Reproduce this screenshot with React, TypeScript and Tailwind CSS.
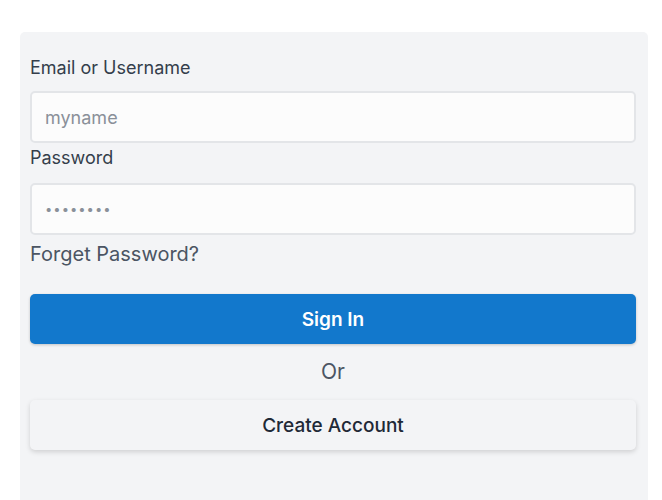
export default function App() {
  return (
    <div className="min-h-[500px] bg-white pl-[20px] pr-[14px] pt-[32px] font-['Inter',sans-serif]">
      <div className="rounded-[5px] bg-[#f3f4f6] pl-[10px] pr-[12px] pt-[24px] pb-[60px]">
        <label className="block text-[18px] leading-[24px] text-[#343e4b]">Email or Username</label>
        <input
          className="mt-[11px] block h-[52px] w-full rounded-[5px] border-2 border-[#e3e5e8] bg-[#fcfcfc] px-[13px] text-[18px] text-[#374151] outline-none placeholder:text-[#8a9099]"
          placeholder="myname"
        />
        <label className="mt-[3px] block text-[18px] leading-[24px] text-[#343e4b]">Password</label>
        <input
          type="password"
          className="mt-[13px] block h-[52px] w-full rounded-[5px] border-2 border-[#e3e5e8] bg-[#fcfcfc] px-[13px] text-[13px] tracking-[1px] text-[#8a9099] outline-none"
          defaultValue="password"
        />
        <div className="mt-[5px] text-[20px] leading-[28px] text-[#4b5563]">Forget Password?</div>
        <button className="mt-[26px] block h-[50px] w-full rounded-[5px] bg-[#1278cc] pt-[2px] text-[19px] font-semibold text-white shadow-[0_1px_3px_rgba(0,0,0,0.2)]">
          Sign In
        </button>
        <div className="mt-[13px] text-center text-[21px] leading-[30px] text-[#4b5563]">Or</div>
        <button className="mt-[13px] block h-[50px] w-full rounded-[5px] bg-[#f3f4f6] pt-[2px] text-[19px] font-medium text-[#1f2937] shadow-[0_2px_5px_rgba(0,0,0,0.15)]">
          Create Account
        </button>
      </div>
    </div>
  );
}
